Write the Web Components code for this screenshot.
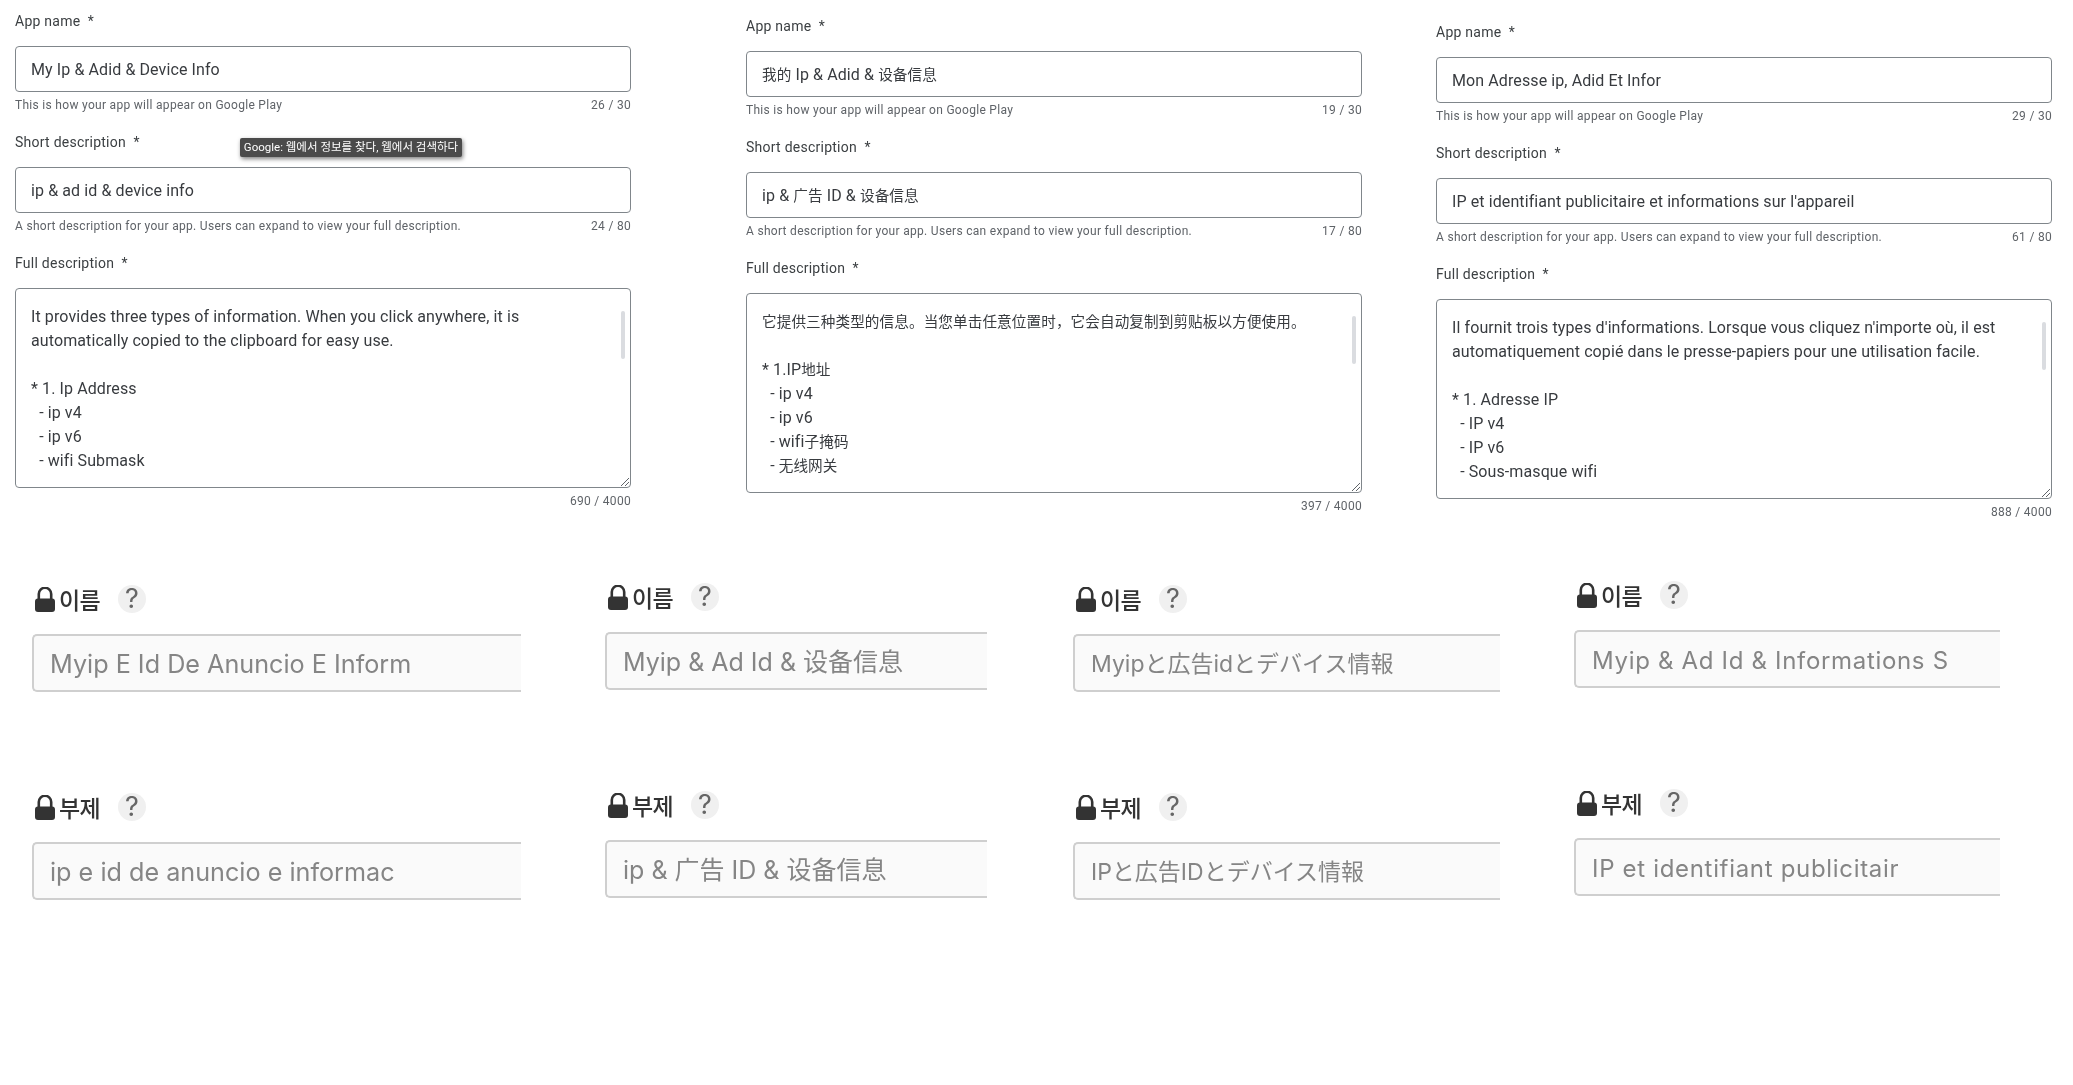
<!DOCTYPE html>
<html lang="ko">
<head>
<meta charset="utf-8">
<title>Store listings</title>
<style>
html,body{margin:0;padding:0;background:#fff;width:2073px;height:1085px;overflow:hidden}
</style>
</head>
<body>
<collage-page>
  <listing-form slot="forms" style="--top:11px;--left:15px">
    <store-field label="App name" hint="This is how your app will appear on Google Play" count="26 / 30">My Ip &amp; Adid &amp; Device Info</store-field>
    <store-field label="Short description" hint="A short description for your app. Users can expand to view your full description." count="24 / 80">ip &amp; ad id &amp; device info<hover-tip slot="overlay">Google: 웹에서 정보를 찾다, 웹에서 검색하다</hover-tip></store-field>
    <store-field multiline label="Full description" count="690 / 4000">It provides three types of information. When you click anywhere, it is
automatically copied to the clipboard for easy use.

* 1. Ip Address
  - ip v4
  - ip v6
  - wifi Submask</store-field>
  </listing-form>
  <listing-form slot="forms" style="--top:16px;--left:115px">
    <store-field label="App name" hint="This is how your app will appear on Google Play" count="19 / 30"><cjk-text>我的</cjk-text> Ip &amp; Adid &amp; <cjk-text>设备信息</cjk-text></store-field>
    <store-field label="Short description" hint="A short description for your app. Users can expand to view your full description." count="17 / 80">ip &amp; <cjk-text>广告</cjk-text> ID &amp; <cjk-text>设备信息</cjk-text></store-field>
    <store-field multiline label="Full description" count="397 / 4000"><cjk-text>它提供三种类型的信息。当您单击任意位置时，它会自动复制到剪贴板以方便使用。</cjk-text>

* 1.IP<cjk-text>地址</cjk-text>
  - ip v4
  - ip v6
  - wifi<cjk-text>子掩码</cjk-text>
  - <cjk-text>无线网关</cjk-text></store-field>
  </listing-form>
  <listing-form slot="forms" style="--top:22px;--left:74px">
    <store-field label="App name" hint="This is how your app will appear on Google Play" count="29 / 30">Mon Adresse ip, Adid Et Infor</store-field>
    <store-field label="Short description" hint="A short description for your app. Users can expand to view your full description." count="61 / 80">IP et identifiant publicitaire et informations sur l'appareil</store-field>
    <store-field multiline label="Full description" count="888 / 4000">Il fournit trois types d'informations. Lorsque vous cliquez n'importe où, il est
automatiquement copié dans le presse-papiers pour une utilisation facile.

* 1. Adresse IP
  - IP v4
  - IP v6
  - Sous-masque wifi</store-field>
  </listing-form>

  <locked-column slot="shots" style="--top:66px;--left:32px;--w:489px;--fs:25.2px;--ls:0px">
    <locked-field label="이름">Myip E Id De Anuncio E Inform</locked-field>
    <locked-field label="부제">ip e id de anuncio e informac</locked-field>
  </locked-column>
  <locked-column slot="shots" style="--top:64px;--left:84px;--w:382px;--fs:25px;--ls:0px">
    <locked-field label="이름">Myip &amp; Ad Id &amp; 设备信息</locked-field>
    <locked-field label="부제">ip &amp; 广告 ID &amp; 设备信息</locked-field>
  </locked-column>
  <locked-column slot="shots" style="--top:66px;--left:86px;--w:427px;--fs:23px;--ls:0px">
    <locked-field lang="ja" label="이름">Myipと広告idとデバイス情報</locked-field>
    <locked-field lang="ja" label="부제">IPと広告IDとデバイス情報</locked-field>
  </locked-column>
  <locked-column slot="shots" style="--top:62px;--left:74px;--w:426px;--fs:24px;--ls:.68px">
    <locked-field label="이름">Myip &amp; Ad Id &amp; Informations S</locked-field>
    <locked-field label="부제">IP et identifiant publicitair</locked-field>
  </locked-column>
</collage-page>

<script>
function shadow(el, html){ el.attachShadow({mode:'open'}).innerHTML = html.trim(); return el.shadowRoot; }

customElements.define('collage-page', class extends HTMLElement{
  constructor(){ super(); shadow(this, `
    <style>
      :host{display:block;width:2073px;height:1085px;overflow:hidden;background:#fff}
      .forms,.shots{display:flex;align-items:flex-start}
      .forms{height:519px;filter:blur(.3px)}
      .shots{filter:blur(.75px)}
    </style>
    <div class="forms"><slot name="forms"></slot></div>
    <div class="shots"><slot name="shots"></slot></div>`); }
});

customElements.define('listing-form', class extends HTMLElement{
  constructor(){ super(); shadow(this, `
    <style>
      :host{display:flex;flex-direction:column;gap:20px;width:616px;flex:none;
        margin-top:var(--top);margin-left:var(--left);
        font-family:Roboto,"Noto Sans CJK SC",sans-serif;color:#3c4043}
    </style><slot></slot>`); }
});

customElements.define('cjk-text', class extends HTMLElement{
  constructor(){ super(); shadow(this, `<style>:host{display:inline;font-family:"Noto Sans CJK SC",sans-serif;font-size:14.6px;line-height:0}</style><slot></slot>`); }
});

customElements.define('hover-tip', class extends HTMLElement{
  constructor(){ super(); shadow(this, `
    <style>
      :host{position:absolute;left:225px;top:6px;height:19px;width:222px;box-sizing:border-box;
        display:flex;align-items:center;justify-content:center;white-space:nowrap;
        background:#4b4b4b;color:#fff;border-radius:2px;
        font:11.5px/19px Roboto,"Noto Sans CJK KR",sans-serif;
        box-shadow:1px 2px 4px rgba(0,0,0,.5)}
    </style><slot></slot>`); }
});

customElements.define('store-field', class extends HTMLElement{
  constructor(){ super();
    const multi = this.hasAttribute('multiline');
    const root = shadow(this, `
    <style>
      :host{display:block;position:relative}
      .label{font-size:14px;line-height:20px;letter-spacing:.25px;color:#3c4043;margin-bottom:15px;white-space:pre}
      .box{box-sizing:border-box;position:relative;background:#fff;border:1px solid #80868b;border-radius:4px;
        font-size:16px;line-height:24px;letter-spacing:.1px;color:#383b3f;padding:0 15px;overflow:hidden}
      .one{height:46px;display:flex;align-items:center;white-space:pre;padding-top:2px}
      .many{height:200px;padding-top:16px;white-space:pre-wrap}
      .thumb{position:absolute;right:5px;top:22px;width:4px;height:48px;border-radius:2px;background:#dadce0}
      svg{position:absolute;right:0;bottom:0}
      .foot{display:flex;justify-content:space-between;margin-top:5px;margin-bottom:-1px;font-size:12px;line-height:16px;letter-spacing:.3px;color:#5f6368}
    </style>
    <div class="label"></div>
    <div class="box ${multi?'many':'one'}"><span><slot></slot></span>${multi?`<div class="thumb"></div><svg width="11" height="11" viewBox="0 0 11 11"><path d="M2 10 L10 2 M6 10 L10 6" stroke="#5f6368" stroke-width="1" fill="none"/></svg>`:''}</div>
    <div class="foot"><span class="hint"></span><span class="count"></span></div>
    <slot name="overlay"></slot>`);
    root.querySelector('.label').textContent = this.getAttribute('label')+'  *';
    root.querySelector('.hint').textContent = this.getAttribute('hint')||'';
    root.querySelector('.count').textContent = this.getAttribute('count')||'';
  }
});

customElements.define('locked-column', class extends HTMLElement{
  constructor(){ super(); shadow(this, `
    <style>
      :host{display:flex;flex-direction:column;gap:101px;flex:none;width:var(--w);
        margin-top:var(--top);margin-left:var(--left)}
    </style><slot></slot>`); }
});

customElements.define('locked-field', class extends HTMLElement{
  constructor(){ super();
    const ja = this.getAttribute('lang')==='ja';
    const root = shadow(this, `
    <style>
      :host{display:block;height:107px}
      .row{display:flex;align-items:center;height:28px;margin-bottom:21px;padding-left:3px;color:#333}
      svg{flex:none;display:block}
      .name{font:500 23px/28px "Noto Sans CJK KR",sans-serif;margin-left:4px;width:42px;white-space:nowrap;letter-spacing:-.7px;color:#333}
      .q{flex:none;width:28px;height:28px;border-radius:50%;background:#f0f0f0;color:#666;margin-left:17px;
        display:flex;align-items:center;justify-content:center;font:27px/28px Inter,sans-serif}
      .input{box-sizing:border-box;height:58px;background:#fafafa;border:2px solid #cfcfcf;border-right:0;
        border-radius:5px 0 0 5px;padding:3px 0 0 16px;display:flex;align-items:center;overflow:hidden;white-space:pre;
        font:var(--fs)/1 Inter,${ja?'"Noto Sans CJK JP"':'"Noto Sans CJK SC"'},sans-serif;letter-spacing:var(--ls);color:#858585}
    </style>
    <div class="row">
      <svg width="20" height="25" viewBox="0 0 20 25"><path d="M3.8 12.5V7a6.2 6.2 0 0 1 12.4 0v5.5" fill="none" stroke="#333" stroke-width="2.6"/><rect x="0" y="11.5" width="20" height="13.5" rx="3" fill="#333"/></svg>
      <span class="name"></span><span class="q">?</span>
    </div>
    <div class="input"><slot></slot></div>`);
    root.querySelector('.name').textContent = this.getAttribute('label');
  }
});
</script>
</body>
</html>
